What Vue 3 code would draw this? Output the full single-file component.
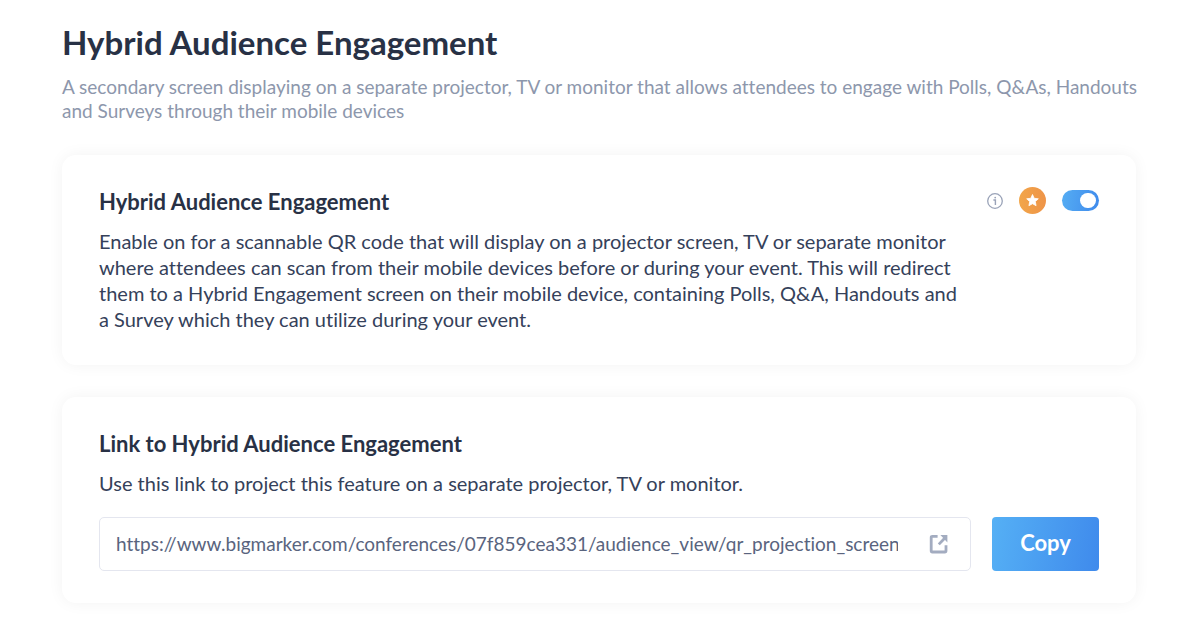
<script setup>
import { ref } from 'vue'

const enabled = ref(true)
const link = ref('https://www.bigmarker.com/conferences/07f859cea331/audience_view/qr_projection_screen')

function copyLink() {
  navigator.clipboard?.writeText(link.value)
}
</script>

<template>
  <main class="page">
    <header class="intro">
      <h1>Hybrid Audience Engagement</h1>
      <p>A secondary screen displaying on a separate projector, TV or monitor that allows attendees to engage with Polls, Q&amp;As, Handouts <br />and Surveys through their mobile devices</p>
    </header>

    <section class="card feature">
      <div class="feature-text">
        <h2>Hybrid Audience Engagement</h2>
        <p>Enable on for a scannable QR code that will display on a projector screen, TV or separate monitor<br />
          where attendees can scan from their mobile devices before or during your event. This will redirect<br />
          them to a Hybrid Engagement screen on their mobile device, containing Polls, Q&amp;A, Handouts and<br />
          a Survey which they can utilize during your event.</p>
      </div>
      <div class="controls">
        <button class="info" type="button" aria-label="More information">
          <svg width="16" height="16" viewBox="0 0 16 16" fill="none" stroke="#9aa3b8">
            <circle cx="8" cy="8" r="7.3" stroke-width="1.3" />
            <path d="M6.4 7H8.4V12" stroke-width="1.4" />
            <circle cx="8.2" cy="4.6" r="0.9" fill="#9aa3b8" stroke="none" />
          </svg>
        </button>
        <svg class="badge" width="27" height="27" viewBox="0 0 27 27" aria-hidden="true">
          <defs>
            <linearGradient id="badge-fill" x1="0" y1="0" x2="1" y2="0">
              <stop offset="0" stop-color="#f2a64a" />
              <stop offset="1" stop-color="#ee9448" />
            </linearGradient>
          </defs>
          <circle cx="13.5" cy="13.5" r="13.5" fill="url(#badge-fill)" />
          <path d="M13.5 7.5L15.2 11.3L19.3 11.8L16.3 14.6L17.1 18.7L13.5 16.7L9.9 18.7L10.7 14.6L7.7 11.8L11.8 11.3Z" fill="#fff" stroke="#fff" stroke-width="0.8" stroke-linejoin="round" />
        </svg>
        <input v-model="enabled" class="toggle" type="checkbox" role="switch" aria-label="Hybrid Audience Engagement" />
      </div>
    </section>

    <section class="card">
      <h2><label for="engagement-link">Link to Hybrid Audience Engagement</label></h2>
      <p>Use this link to project this feature on a separate projector, TV or monitor.</p>
      <div class="link-row">
        <div class="field">
          <input id="engagement-link" v-model="link" type="text" readonly />
          <a :href="link" aria-label="Open link">
            <svg width="20" height="20" viewBox="0 0 20 20" fill="none" stroke="#a3acc0" stroke-width="2.8">
              <path d="M8.6 2.3H3.4Q2.2 2.3 2.2 3.5V16.8Q2.2 18 3.4 18H15.8Q17 18 17 16.8V11.2" />
              <path d="M9.8 10.4L15.9 4" />
              <path d="M11.4 1H18.4V8.4Z" fill="#a3acc0" stroke="none" />
            </svg>
          </a>
        </div>
        <button class="copy" type="button" @click="copyLink">Copy</button>
      </div>
    </section>
  </main>
</template>

<style>
body {
  margin: 0;
  background: #fff;
}
</style>

<style scoped>
.page {
  box-sizing: border-box;
  padding: 22px 46px 23px 62px;
  font-family: Lato, "Liberation Sans", sans-serif;
  font-variant-ligatures: none;
  color: #35415a;
}
h1, h2, p {
  margin: 0;
}
h1 {
  font-size: 33px;
  line-height: 40px;
  font-weight: 700;
  color: #283145;
}
h2 {
  font-size: 22px;
  line-height: 28px;
  font-weight: 700;
  color: #283145;
}
p {
  font-size: 20px;
  line-height: 26px;
}
.intro p {
  margin-top: 13px;
  font-size: 19px;
  line-height: 24px;
  color: #8d97ac;
  white-space: nowrap;
}
.card {
  margin-top: 32px;
  padding: 33px 37px 32px;
  border-radius: 14px;
  background: #fff;
  box-shadow: 0 0 16px rgba(0, 0, 0, 0.05);
}
.feature {
  display: flex;
  justify-content: space-between;
  padding-bottom: 33px;
}
.feature-text {
  white-space: nowrap;
}
.card p {
  margin-top: 12px;
}
.controls {
  display: flex;
  align-items: center;
  gap: 16px;
  height: 25px;
}
.info {
  display: flex;
  padding: 0;
  border: 0;
  background: none;
}
.toggle {
  appearance: none;
  display: flex;
  justify-content: flex-end;
  box-sizing: border-box;
  width: 37px;
  height: 21px;
  margin: 0;
  padding: 3px;
  border-radius: 11px;
  background: linear-gradient(100deg, #55adf3, #3f8aec);
}
.toggle:not(:checked) {
  justify-content: flex-start;
  background: #c5ccd9;
}
.toggle::before {
  content: "";
  width: 16px;
  height: 15px;
  border-radius: 8px;
  background: #fff;
}
.link-row {
  display: flex;
  gap: 21px;
  margin-top: 21px;
}
.field {
  display: flex;
  flex: 1;
  align-items: center;
  box-sizing: border-box;
  min-width: 0;
  height: 54px;
  padding: 0 21px 0 16px;
  border: 1px solid #e4e6ef;
  border-radius: 5px;
}
.field input {
  flex: 1;
  min-width: 0;
  margin-right: 31px;
  padding: 0;
  border: 0;
  outline: 0;
  background: none;
  font: 19px/26px Lato, "Liberation Sans", sans-serif;
  font-variant-ligatures: none;
  color: #59647e;
}
.field a {
  display: flex;
}
.copy {
  width: 107px;
  height: 54px;
  padding: 0 0 2px;
  border: 0;
  border-radius: 4px;
  background: linear-gradient(100deg, #55b0f5, #3f8aec);
  font: 700 22px/28px Lato, "Liberation Sans", sans-serif;
  color: #fff;
}
</style>
